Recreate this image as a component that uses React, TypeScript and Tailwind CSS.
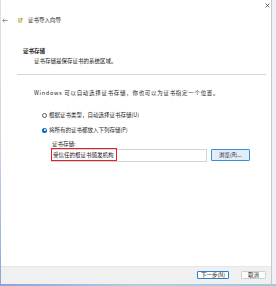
export default function App() {
  return (
    <div className="w-[276px] h-[286px] overflow-hidden flex flex-col bg-[#eef0f3] font-['Noto_Sans_CJK_SC','Noto_Sans',sans-serif] text-[#1b1b1b] text-[5.5px] leading-[8px]">
      <div className="flex h-[284px]">
        <div className="w-[1px] bg-linear-to-b from-[#dde0e6] via-[#cfd5e2] to-[#8ea3da]" />
        <div className="w-[271px] flex flex-col bg-white border-r border-[#c8c8c8]">
          {/* title bar */}
          <div className="h-[12px] flex justify-end pt-[3px] pr-[1px]">
            <svg width="5" height="5" viewBox="0 0 5 5">
              <path d="M0.6 0.6 L4.4 4.4 M4.4 0.6 L0.6 4.4" stroke="#4a4a4a" strokeWidth="0.8" />
            </svg>
          </div>
          {/* header row */}
          <div className="mt-[1px] h-[14px] flex items-center pl-[1px]">
            <svg width="6" height="5" viewBox="0 0 6 5">
              <path d="M5.6 2.5 H0.8 M2.6 0.6 L0.7 2.5 L2.6 4.4" stroke="#555" strokeWidth="0.6" fill="none" />
            </svg>
            <svg className="ml-[10px]" width="5" height="6" viewBox="0 0 5 6">
              <rect x="0.5" y="1.5" width="3.5" height="4" fill="#e9e2b0" stroke="#b9a65a" strokeWidth="0.4" />
              <path d="M3 0.3 L4.8 2.2 L3 2.8 Z" fill="#5bb04a" />
              <circle cx="1.6" cy="3.8" r="1" fill="#e6b43a" />
            </svg>
            <span className="ml-[5px]">证书导入向导</span>
          </div>
          {/* heading */}
          <div className="mt-[20px] pl-[22px] h-[8px] font-bold">证书存储</div>
          <div className="mt-[2px] pl-[33px] h-[8px]">证书存储是保存证书的系统区域。</div>
          <div className="mt-[9px] ml-[16px] w-[249px] h-[1px] bg-[#d6d6d6]" />
          {/* content */}
          <div className="mt-[14px] pl-[33px] h-[8px] tracking-[0.7px] whitespace-nowrap">Windows 可以自动选择证书存储，你也可以为证书指定一个位置。</div>
          <div className="mt-[14px] pl-[41px] h-[8px] flex items-center gap-[2px]">
            <span className="w-[5px] h-[5px] rounded-full border-[0.8px] border-[#5c5c5c] bg-white" />
            <span>根据证书类型，自动选择证书存储(U)</span>
          </div>
          <div className="mt-[7px] pl-[41px] h-[8px] flex items-center gap-[2px]">
            <span className="w-[5px] h-[5px] rounded-full bg-[#0067c0] flex items-center justify-center">
              <span className="w-[2px] h-[2px] rounded-full bg-white" />
            </span>
            <span>将所有的证书都放入下列存储(P)</span>
          </div>
          <div className="mt-[6px] pl-[51px] h-[8px]">证书存储:</div>
          <div className="mt-[1px] pl-[50px] flex items-start">
            <div className="w-[156px] h-[13px] border border-[#d4d4d4] bg-white relative">
              <span className="absolute left-[-1px] top-[-2px] w-[66px] h-[13px] border border-[#e0202a] pl-[1px] flex items-center">
                受信任的根证书颁发机构
              </span>
            </div>
            <div className="ml-[4px] w-[39px] h-[12px] border border-[#3b8fd9] bg-[#e1eefa] rounded-[1px] flex items-center justify-center">
              浏览(R)...
            </div>
          </div>
          <div className="flex-1" />
          {/* footer */}
          <div className="h-[18px] bg-[#f0f0f0] border-t border-[#e6e6e6] flex items-start justify-end pt-[4px] pr-[5px]">
            <div className="w-[32px] h-[8px] border border-[#2a7fd4] bg-[#fdfdfd] rounded-[1px] flex items-center justify-center">
              下一步(N)
            </div>
            <div className="ml-[12px] w-[25px] h-[8px] border border-[#d0d0d0] bg-[#fdfdfd] rounded-[1px] flex items-center justify-center">
              取消
            </div>
          </div>
        </div>
        <div className="flex-1 bg-[#eef0f3]" />
      </div>
      <div className="h-[2px] bg-linear-to-r from-[#8ea2d9] via-[#a9d2e6] to-[#9cc9dc]" />
    </div>
  );
}
